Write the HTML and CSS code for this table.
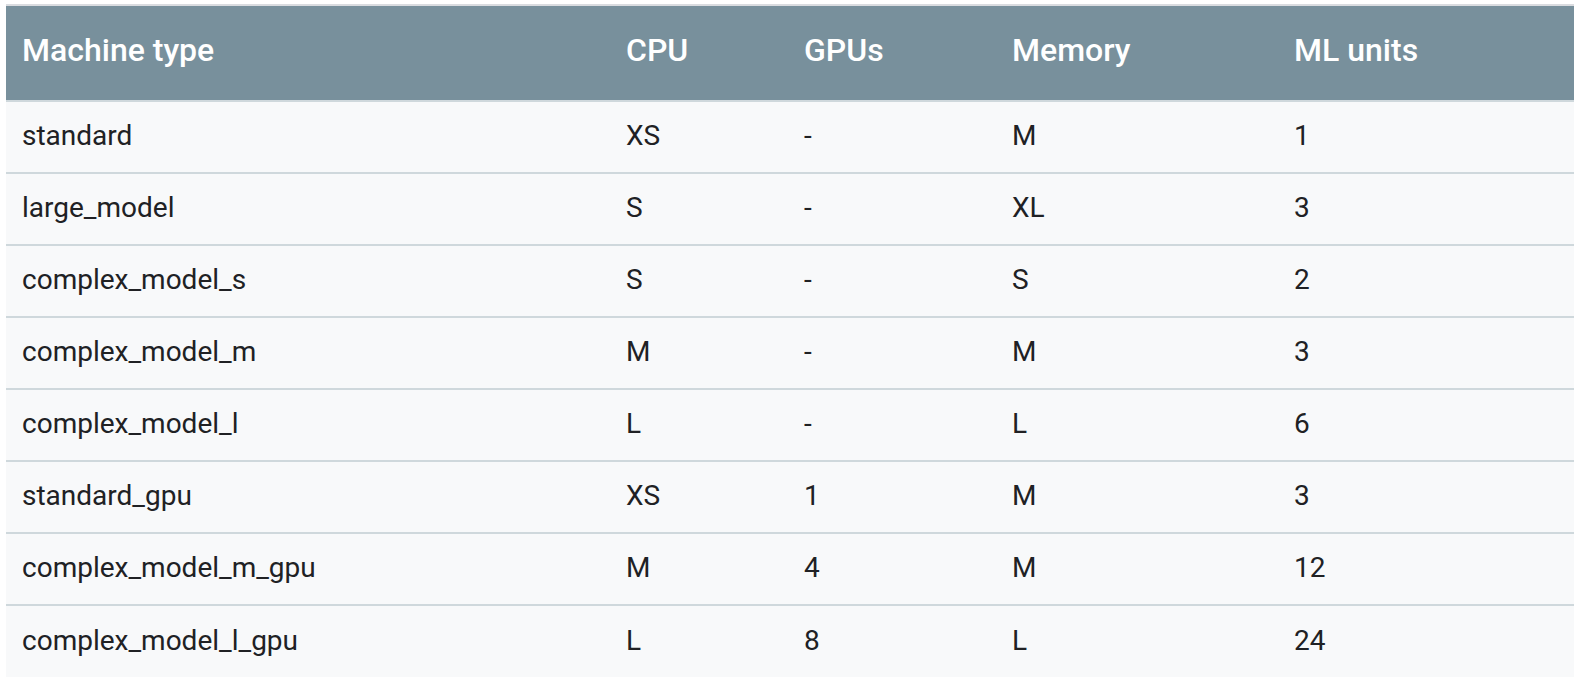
FILE: index.html
```html
<!DOCTYPE html>
<html>
<head>
<meta charset="utf-8">
<link rel="stylesheet" href="styles.css">
</head>
<body>
<div class="wrap">
<table class="spec">
  <colgroup>
    <col class="c1"><col class="c2"><col class="c3"><col class="c4"><col class="c5">
  </colgroup>
  <thead>
    <tr><th>Machine type</th><th>CPU</th><th>GPUs</th><th>Memory</th><th>ML units</th></tr>
  </thead>
  <tbody>
    <tr><td>standard</td><td>XS</td><td>-</td><td>M</td><td>1</td></tr>
    <tr><td>large_model</td><td>S</td><td>-</td><td>XL</td><td>3</td></tr>
    <tr><td>complex_model_s</td><td>S</td><td>-</td><td>S</td><td>2</td></tr>
    <tr><td>complex_model_m</td><td>M</td><td>-</td><td>M</td><td>3</td></tr>
    <tr><td>complex_model_l</td><td>L</td><td>-</td><td>L</td><td>6</td></tr>
    <tr><td>standard_gpu</td><td>XS</td><td>1</td><td>M</td><td>3</td></tr>
    <tr><td>complex_model_m_gpu</td><td>M</td><td>4</td><td>M</td><td>12</td></tr>
    <tr><td>complex_model_l_gpu</td><td>L</td><td>8</td><td>L</td><td>24</td></tr>
  </tbody>
</table>
</div>
</body>
</html>
```

FILE: styles.css
```css
html, body {
  margin: 0;
  padding: 0;
  background: #ffffff;
}
.wrap {
  padding: 4px 16px 6px 6px;
}
.spec {
  width: 1568px;
  border-collapse: collapse;
  table-layout: fixed;
  font-family: Roboto, "Liberation Sans", sans-serif;
  border-top: 2px solid #dadce0;
}
.c1 { width: 604px; }
.c2 { width: 178px; }
.c3 { width: 208px; }
.c4 { width: 282px; }
.c5 { width: 296px; }
.spec th {
  background: #78909c;
  color: #ffffff;
  font-weight: 500;
  font-size: 32px;
  text-align: left;
  height: 96px;
  padding: 0 16px 6px 16px;
  box-sizing: border-box;
  vertical-align: middle;
  border-bottom: 2px solid #cfd8dc;
  line-height: 1;
}
.spec td {
  background: #f8f9fa;
  color: #202124;
  font-size: 28px;
  height: 72px;
  padding: 0 16px 2px 16px;
  box-sizing: border-box;
  vertical-align: middle;
  border-bottom: 2px solid #cfd8dc;
  line-height: 1;
}
.spec tbody tr:last-child td {
  border-bottom: none;
}
```
